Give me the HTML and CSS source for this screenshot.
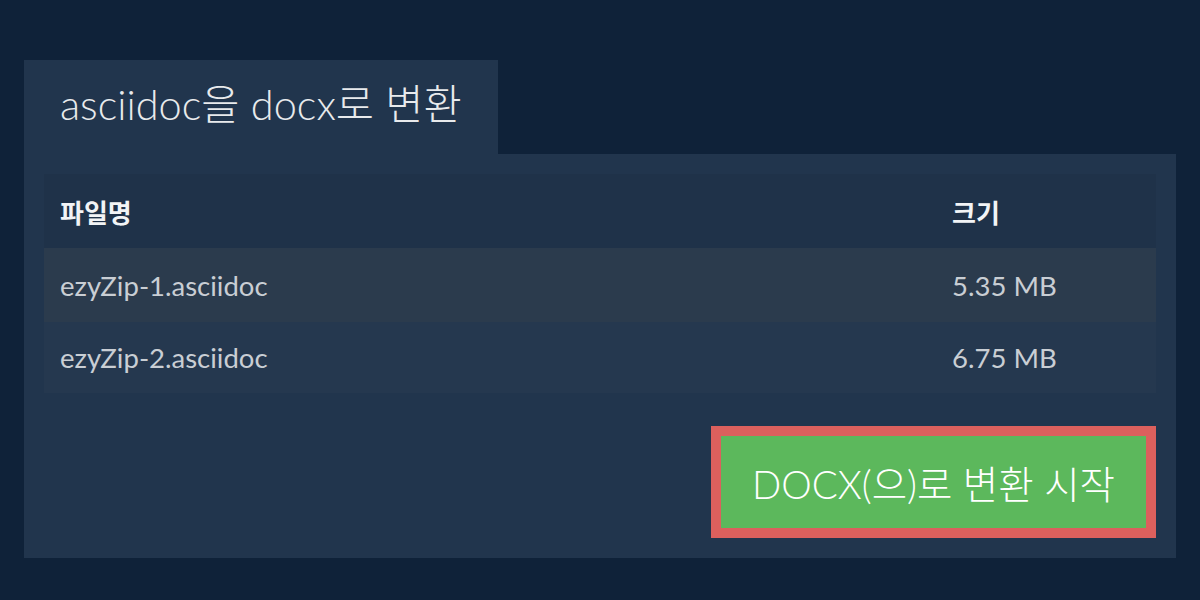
FILE: index.html
```html
<!DOCTYPE html>
<html lang="ko">
<head>
<meta charset="utf-8">
<link rel="stylesheet" href="styles.css">
</head>
<body>
<div class="wrap">
  <div class="tab"><h1 class="title">asciidoc을 docx로 변환</h1></div>
  <div class="panel">
    <div class="table">
      <div class="row head"><div class="c-name">파일명</div><div class="c-size">크기</div></div>
      <div class="row r1"><div class="c-name">ezyZip-1.asciidoc</div><div class="c-size">5.35 MB</div></div>
      <div class="row r2"><div class="c-name">ezyZip-2.asciidoc</div><div class="c-size">6.75 MB</div></div>
    </div>
    <div class="actions">
      <button class="btn">DOCX(으)로 변환 시작</button>
    </div>
  </div>
</div>
</body>
</html>
```
FILE: styles.css
```css
html, body { margin: 0; padding: 0; }
body {
  background: #0f2239;
  width: 1200px;
  height: 600px;
  overflow: hidden;
  font-family: Lato, "Noto Sans CJK KR", sans-serif;
}
.wrap { padding: 60px 24px 0 24px; }
.tab {
  width: 474px;
  height: 94px;
  background: #21354d;
  box-sizing: border-box;
  padding-left: 36px;
}
.title {
  margin: 0;
  font-weight: 300;
  font-size: 41.5px;
  line-height: 88px;
  color: #e8eaec;
}
.panel {
  background: #21354d;
  height: 404px;
  box-sizing: border-box;
  padding: 20px 20px 0 20px;
}
.table { display: flex; flex-direction: column; }
.row {
  display: flex;
  align-items: center;
  padding-left: 16px;
  font-size: 27.5px;
  color: #c9ced4;
}
.head { height: 74px; background: #1f3249; font-weight: 700; font-size: 26px; color: #f2f4f6; }
.r1 { height: 74px; background: #2b3b4d; }
.r2 { height: 71px; background: #25384f; }
.c-name { flex: 1; }
.c-size { width: 204px; }
.actions {
  display: flex;
  justify-content: flex-end;
  padding-top: 33px;
}
.btn {
  width: 445px;
  height: 112px;
  border: 10px solid #dc605d;
  background: #5cb85c;
  color: #ffffff;
  font-family: Lato, "Noto Sans CJK KR", sans-serif;
  font-weight: 300;
  font-size: 38.5px;
  padding: 0;
  box-sizing: border-box;
}
```
